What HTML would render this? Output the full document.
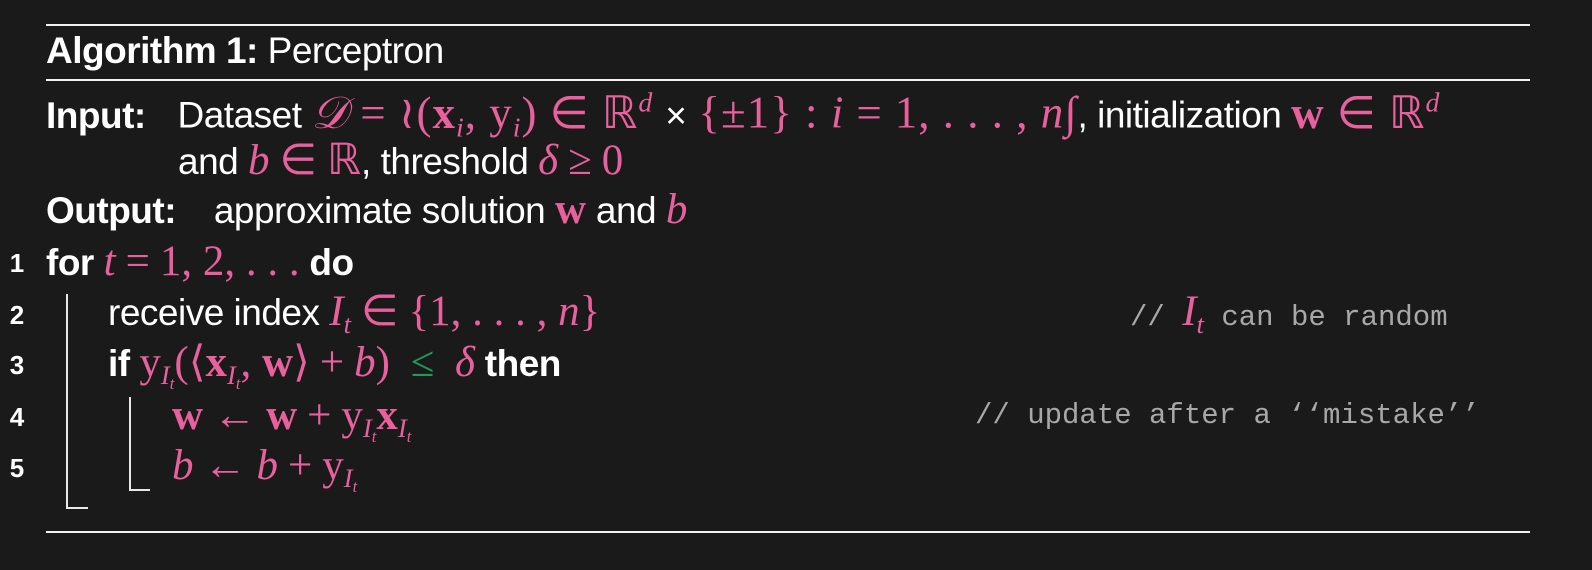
<!DOCTYPE html>
<html><head><meta charset="utf-8"><style>
body{margin:0;background:#1a1a1a;width:1592px;height:570px;overflow:hidden;position:relative;font-family:"Liberation Sans",sans-serif;color:#fff}
.r{position:absolute;left:46px;width:1484px;height:2px;background:#f2f2f2}
.l{position:absolute;height:50px;line-height:50px;font-size:37px;white-space:nowrap;letter-spacing:-0.5px}
.m{color:#e8609c;font-family:"Liberation Serif",serif;font-size:43px;letter-spacing:0}
.w .m{font-size:45px;letter-spacing:1px}
.w .o{padding:0 12px}
.i{font-style:italic}
.g{color:#1f9a5c}
.o{padding:0 10px}
.n{position:absolute;left:6px;width:22px;text-align:center;font-weight:bold;font-size:26px;height:50px;line-height:50px}
.c{position:absolute;font-family:"Liberation Mono",monospace;color:#a8a8a8;font-size:29px;height:50px;line-height:50px;white-space:nowrap}
sub{font-size:0.62em;vertical-align:-0.3em}
sup{font-size:0.62em;vertical-align:0.6em}
.v{position:absolute;background:#e8e8e8}
</style></head><body>
<div class="r" style="top:24px"></div>
<div class="r" style="top:79px"></div>
<div class="r" style="top:531px"></div>
<div class="l" style="left:46px;top:26px;font-size:37px"><b>Algorithm 1:</b> Perceptron</div>
<div class="l w" style="left:46px;top:78px"><b style="margin-right:22px">Input:</b> Dataset <span class="m"><i>𝒟</i><span class="o">=</span>≀(<b>x</b><sub class="i">i</sub>, y<sub class="i">i</sub>)<span class="o">∈</span>ℝ<sup class="i">d</sup></span><span class="o">×</span><span class="m">{±1} : <i>i</i><span class="o">=</span>1, . . . , <i>n</i>∫</span>, initialization <span class="m"><b>w</b><span class="o">∈</span>ℝ<sup class="i">d</sup></span></div>
<div class="l" style="left:178px;top:136px">and <span class="m"><i>b</i><span class="o">∈</span>ℝ</span>, threshold <span class="m"><i>δ</i><span class="o">≥</span>0</span></div>
<div class="l" style="left:46px;top:185px"><b style="margin-right:28px">Output:</b> approximate solution <span class="m"><b>w</b></span> and <span class="m"><i>b</i></span></div>
<div class="n" style="top:238px">1</div>
<div class="l" style="left:46px;top:237px"><b>for</b> <span class="m"><i>t</i><span class="o">=</span>1, 2, . . .</span> <b>do</b></div>
<div class="n" style="top:290px">2</div>
<div class="l" style="left:108px;top:287px">receive index <span class="m"><i>I<sub>t</sub></i><span class="o">∈</span>{1, . . . , <i>n</i>}</span></div>
<div class="c" style="left:1130px;top:287px">// <span class="m"><i>I<sub>t</sub></i></span> can be random</div>
<div class="n" style="top:340px">3</div>
<div class="l" style="left:108px;top:338px"><b>if</b> <span class="m">y<sub class="i">I<sub>t</sub></sub>(⟨<b>x</b><sub class="i">I<sub>t</sub></sub>, <b>w</b>⟩<span class="o">+</span><i>b</i>)<span class="o g">&nbsp;≤&nbsp;</span><i>δ</i></span> <b>then</b></div>
<div class="n" style="top:392px">4</div>
<div class="l" style="left:172px;top:391px"><span class="m"><b>w</b><span class="o">←</span><b>w</b><span class="o">+</span>y<sub class="i">I<sub>t</sub></sub><b>x</b><sub class="i">I<sub>t</sub></sub></span></div>
<div class="c" style="left:975px;top:391px">// update after a ‘‘mistake’’</div>
<div class="n" style="top:443px">5</div>
<div class="l" style="left:172px;top:441px"><span class="m"><i>b</i><span class="o">←</span><i>b</i><span class="o">+</span>y<sub class="i">I<sub>t</sub></sub></span></div>
<div class="v" style="left:66px;top:294px;width:2px;height:215px"></div>
<div class="v" style="left:66px;top:507px;width:22px;height:2px"></div>
<div class="v" style="left:129px;top:397px;width:2px;height:94px"></div>
<div class="v" style="left:129px;top:489px;width:21px;height:2px"></div>
</body></html>
